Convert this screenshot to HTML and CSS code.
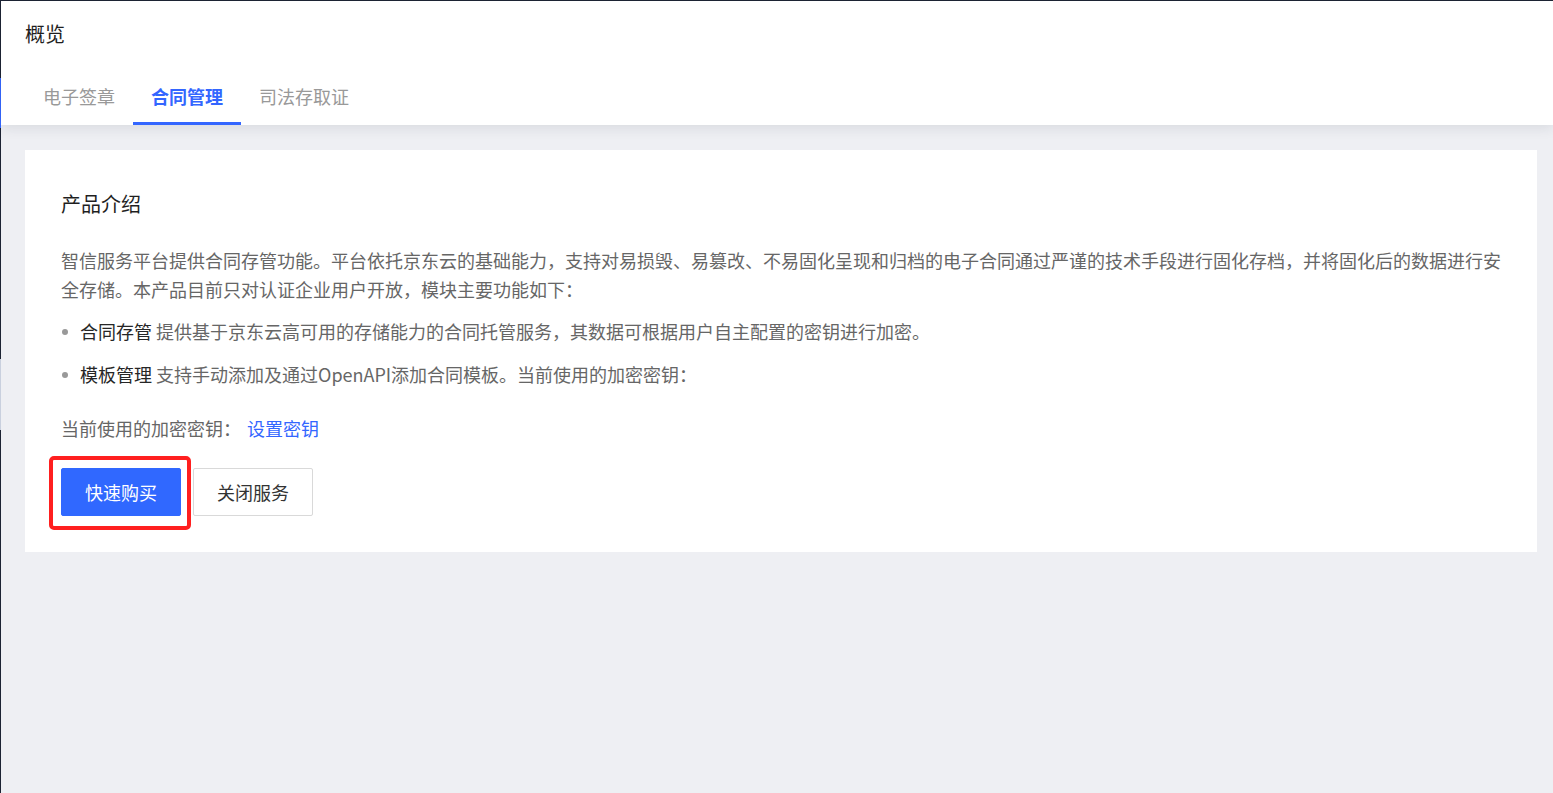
FILE: index.html
```html
<!DOCTYPE html>
<html lang="zh-CN">
<head>
<meta charset="utf-8">
<title>概览</title>
<link rel="stylesheet" href="styles.css">
</head>
<body>
<div class="frame">
  <div class="edge">
    <div class="edge-seg edge-dark1"></div>
    <div class="edge-seg edge-blue"></div>
    <div class="edge-seg edge-dark2"></div>
    <div class="edge-seg edge-light"></div>
    <div class="edge-seg edge-dark3"></div>
  </div>
  <div class="main">
    <header class="header">
      <h1 class="page-title">概览</h1>
      <nav class="tabs">
        <a class="tab">电子签章</a>
        <a class="tab tab-active">合同管理</a>
        <a class="tab">司法存取证</a>
      </nav>
    </header>
    <section class="content">
      <div class="card">
        <h2 class="card-title">产品介绍</h2>
        <p class="intro">智信服务平台提供合同存管功能。平台依托京东云的基础能力，支持对易损毁、易篡改、不易固化呈现和归档的电子合同通过严谨的技术手段进行固化存档，并将固化后的数据进行安全存储。本产品目前只对认证企业用户开放，模块主要功能如下：</p>
        <ul class="features">
          <li class="feature"><span class="feature-name">合同存管</span> 提供基于京东云高可用的存储能力的合同托管服务，其数据可根据用户自主配置的密钥进行加密。</li>
          <li class="feature"><span class="feature-name">模板管理</span> 支持手动添加及通过OpenAPI添加合同模板。当前使用的加密密钥：</li>
        </ul>
        <div class="key-row">当前使用的加密密钥：<a class="link">设置密钥</a></div>
        <div class="actions">
          <div class="highlight-wrap">
            <button class="btn btn-primary">快速购买</button>
            <div class="highlight"></div>
          </div>
          <button class="btn btn-default">关闭服务</button>
        </div>
      </div>
    </section>
  </div>
</div>
</body>
</html>
```

FILE: styles.css
```css
* {
  box-sizing: border-box;
}

html, body {
  margin: 0;
  padding: 0;
  height: 100%;
}

body {
  font-family: "Noto Sans CJK SC", "Noto Sans", "Liberation Sans", sans-serif;
  background: #eeeff3;
  color: #333;
}

.frame {
  display: flex;
  height: 793px;
  border-top: 1px solid #1c2333;
  overflow: hidden;
}

.edge {
  width: 1px;
  flex: 0 0 1px;
  display: flex;
  flex-direction: column;
}

.edge-seg {
  width: 1px;
}

.edge-dark1 { height: 77px; background: #1c2333; }
.edge-blue { height: 50px; background: #3366ff; }
.edge-dark2 { height: 231px; background: #1c2333; }
.edge-light { height: 71px; background: #c9d0de; }
.edge-dark3 { flex: 1; background: #1c2333; }

.main {
  flex: 1;
  display: flex;
  flex-direction: column;
  background: #eeeff3;
}

.header {
  background: #fff;
  padding: 19px 0 0 24px;
  box-shadow: 0 3px 12px rgba(30, 35, 60, 0.10);
  position: relative;
  z-index: 1;
}

.page-title {
  margin: 0;
  font-size: 20px;
  line-height: 28px;
  font-weight: 400;
  color: #1f1f1f;
}

.tabs {
  display: flex;
  margin-top: 21px;
}

.tab {
  padding: 14px 18px 13px;
  line-height: 26px;
  font-size: 18px;
  color: #999;
  border-bottom: 3px solid transparent;
  cursor: pointer;
}

.tab-active {
  color: #3366ff;
  font-weight: 700;
  border-bottom-color: #3366ff;
}

.content {
  padding: 25px 16px 0 24px;
}

.card {
  background: #fff;
  padding: 40px 30px 36px 36px;
}

.card-title {
  margin: 0;
  font-size: 20px;
  line-height: 28px;
  font-weight: 400;
  color: #1f1f1f;
}

.intro {
  margin: 28px 0 0;
  font-size: 18px;
  line-height: 29px;
  color: #666;
}

.features {
  list-style: none;
  margin: 13px 0 0;
  padding: 0;
  display: flex;
  flex-direction: column;
  gap: 14px;
}

.feature {
  position: relative;
  padding-left: 19px;
  font-size: 18px;
  line-height: 29px;
  color: #666;
}

.feature::before {
  content: "";
  position: absolute;
  left: 1px;
  top: 12px;
  width: 6px;
  height: 6px;
  border-radius: 50%;
  background: #999;
}

.feature-name {
  color: #262626;
}

.key-row {
  margin-top: 25px;
  font-size: 18px;
  line-height: 29px;
  color: #666;
}

.link {
  margin-left: 6px;
  color: #3366ff;
  cursor: pointer;
}

.actions {
  margin-top: 25px;
  display: flex;
  gap: 12px;
}

.highlight-wrap {
  position: relative;
}

.btn {
  width: 120px;
  height: 48px;
  font-family: inherit;
  font-size: 18px;
  border-radius: 2px;
  cursor: pointer;
  padding: 0;
}

.btn-primary {
  background: #3068ff;
  border: 1px solid #3068ff;
  color: #fff;
}

.btn-default {
  background: #fff;
  border: 1px solid #d9d9d9;
  color: #333;
}

.highlight {
  position: absolute;
  left: -12px;
  top: -12px;
  width: 142px;
  height: 74px;
  border: 4px solid #ff1f1f;
  border-radius: 5px;
  pointer-events: none;
}
```
